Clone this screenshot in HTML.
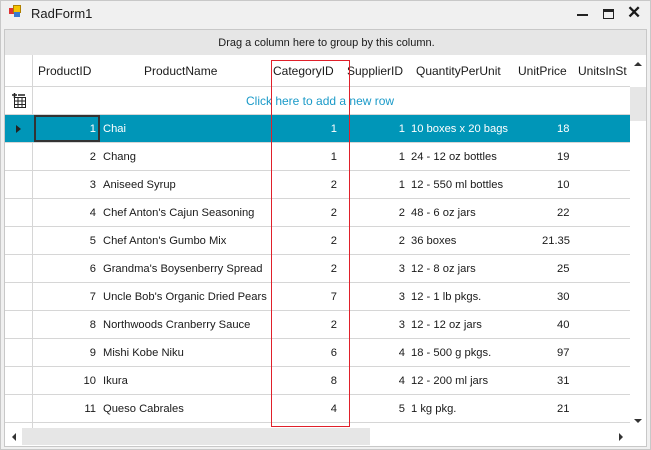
<!DOCTYPE html>
<html><head><style>
*{margin:0;padding:0;box-sizing:border-box}
body{width:651px;height:450px;background:#f0f0f0;font-family:"Liberation Sans",sans-serif;font-size:12px;color:#1a1a1a;position:relative;overflow:hidden}
.a{position:absolute}
.win{left:0;top:0;width:651px;height:450px;border:1px solid #c8c8c8}
.grid{left:4px;top:29px;width:643px;height:418px;border:1px solid #c8c8c8;background:#fff;overflow:hidden}
.row{position:absolute;left:0;width:625px;height:28px;border-bottom:1px solid #d6d6d6}
.c{position:absolute;top:0;line-height:28px;white-space:nowrap;font-size:11.2px}
.r{text-align:right}
.sel{background:#0096b8;color:#fff}
</style></head><body>
<div class="a win"></div>
<div class="a" style="left:9px;top:8px;width:6px;height:6px;background:#d33"></div>
<div class="a" style="left:13px;top:5px;width:8px;height:8px;background:#f5c400;border:1px solid #b08000"></div>
<div class="a" style="left:14px;top:12px;width:6px;height:5px;background:#3a7ad0"></div>
<div class="a" style="left:31px;top:6px;font-size:13px">RadForm1</div>
<div class="a" style="left:577px;top:14px;width:11px;height:2px;background:#222"></div>
<div class="a" style="left:603px;top:9px;width:11px;height:10px;border:1.5px solid #222;border-top-width:3px"></div>
<div class="a" style="left:627px;top:3px;font-size:17px;font-weight:bold">✕</div>
<div class="a grid">
 <div class="a" style="left:0;top:0;width:643px;height:25px;background:#e6e6e6;text-align:center;line-height:26px;font-size:11px">Drag a column here to group by this column.</div>
 <div class="a" style="left:0;top:25px;width:28px;height:392px;border-right:1px solid #d6d6d6"></div>
 <div class="row" style="top:25px;height:32px">
  <div class="c" style="left:33px;line-height:33px;font-size:12px">ProductID</div>
  <div class="c" style="left:139px;line-height:33px;font-size:12px">ProductName</div>
  <div class="c" style="left:268px;line-height:33px;font-size:12px">CategoryID</div>
  <div class="c" style="left:342px;line-height:33px;font-size:12px">SupplierID</div>
  <div class="c" style="left:411px;line-height:33px;font-size:12px">QuantityPerUnit</div>
  <div class="c" style="left:513px;line-height:33px;font-size:12px">UnitPrice</div>
  <div class="c" style="left:573px;line-height:33px;font-size:12px">UnitsInSt</div>
 </div>
 <div class="row" style="top:57px;height:28px">
  <div class="c" style="left:241px;color:#1a9ac8;font-size:12px;line-height:29px">Click here to add a new row</div>
  <svg class="a" style="left:7px;top:6px" width="14" height="15"><g fill="none" stroke="#222" stroke-width="1"><rect x="2.5" y="4.5" width="11" height="10"/><path d="M2.5 8h11M2.5 11.5h11M6 4.5v10M10 4.5v10"/></g><path d="M0 2h5M2.5 0v5M6 2h7" stroke="#222" stroke-width="1.5"/></svg>
 </div>
 <div id="rows"></div>
 <div class="a" style="left:625px;top:25px;width:17px;height:373px;background:#fff"></div>
 <div class="a" style="left:625px;top:57px;width:17px;height:34px;background:#e6e6e6"></div>
 <div class="a" style="left:629px;top:32px;width:0;height:0;border:4px solid transparent;border-bottom:4px solid #333;border-top:0"></div>
 <div class="a" style="left:629px;top:389px;width:0;height:0;border:4px solid transparent;border-top:4px solid #333;border-bottom:0"></div>
 <div class="a" style="left:0;top:398px;width:625px;height:19px;background:#fff"></div>
 <div class="a" style="left:17px;top:398px;width:348px;height:17px;background:#e6e6e6"></div>
 <div class="a" style="left:7px;top:403px;width:0;height:0;border:4px solid transparent;border-right:4px solid #333;border-left:0"></div>
 <div class="a" style="left:614px;top:403px;width:0;height:0;border:4px solid transparent;border-left:4px solid #333;border-right:0"></div>
</div>
<div class="a" style="left:271px;top:60px;width:79px;height:367px;border:1px solid #e0202a"></div>
<script>
var d=[[1,"Chai",1,1,"10 boxes x 20 bags","18"],[2,"Chang",1,1,"24 - 12 oz bottles","19"],[3,"Aniseed Syrup",2,1,"12 - 550 ml bottles","10"],[4,"Chef Anton's Cajun Seasoning",2,2,"48 - 6 oz jars","22"],[5,"Chef Anton's Gumbo Mix",2,2,"36 boxes","21.35"],[6,"Grandma's Boysenberry Spread",2,3,"12 - 8 oz jars","25"],[7,"Uncle Bob's Organic Dried Pears",7,3,"12 - 1 lb pkgs.","30"],[8,"Northwoods Cranberry Sauce",2,3,"12 - 12 oz jars","40"],[9,"Mishi Kobe Niku",6,4,"18 - 500 g pkgs.","97"],[10,"Ikura",8,4,"12 - 200 ml jars","31"],[11,"Queso Cabrales",4,5,"1 kg pkg.","21"]];
var h="";d.forEach(function(r,i){var t=85+i*28;var s=i==0;
h+='<div class="row'+(s?' sel':'')+'" style="top:'+t+'px'+(s?';left:0;width:625px':'')+'">'+
(s?'<div class="a" style="left:0;top:0;width:28px;height:27px;background:#0096b8"></div><div class="a" style="left:11px;top:10px;border:4px solid transparent;border-left:5px solid #222;border-right:0"></div><div class="a" style="left:29px;top:0;width:66px;height:27px;border:2px solid #333"></div>':'')+
'<div class="c r" style="left:29px;width:62px">'+r[0]+'</div><div class="c" style="left:98px">'+r[1]+'</div><div class="c r" style="left:270px;width:62px">'+r[2]+'</div><div class="c r" style="left:340px;width:60px">'+r[3]+'</div><div class="c" style="left:406px">'+r[4]+'</div><div class="c" style="left:'+(r[5].length>2?537:552)+'px">'+r[5]+'</div></div>';});
document.getElementById("rows").innerHTML=h;
</script>
</body></html>
